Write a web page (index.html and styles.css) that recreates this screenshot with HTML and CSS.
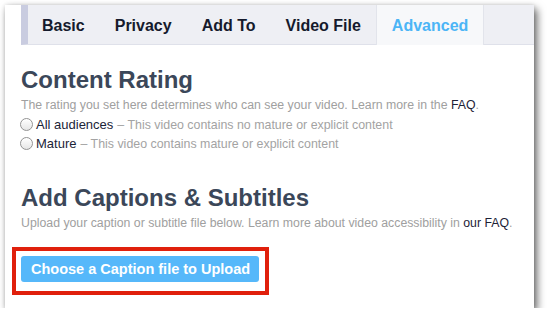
FILE: index.html
```html
<!DOCTYPE html>
<html>
<head>
<meta charset="utf-8">
<link rel="stylesheet" href="styles.css">
</head>
<body>
<div class="panel">
  <nav class="tabs">
    <span class="tab first">Basic</span>
    <span class="tab">Privacy</span>
    <span class="tab">Add To</span>
    <span class="tab">Video File</span>
    <span class="tab active">Advanced</span>
  </nav>
  <h2 class="heading first-heading">Content Rating</h2>
  <p class="desc">The rating you set here determines who can see your video. Learn more in the <a class="link">FAQ</a>.</p>
  <div class="options">
    <label class="option"><span class="radio"></span><span class="label">All audiences</span><span class="note">– This video contains no mature or explicit content</span></label>
    <label class="option"><span class="radio"></span><span class="label">Mature</span><span class="note">– This video contains mature or explicit content</span></label>
  </div>
  <h2 class="heading second-heading">Add Captions &amp; Subtitles</h2>
  <p class="desc">Upload your caption or subtitle file below. Learn more about video accessibility in <a class="link">our FAQ</a>.</p>
  <div class="highlight">
    <button class="upload">Choose a Caption file to Upload</button>
  </div>
</div>
</body>
</html>
```
FILE: styles.css
```css
html, body {
  margin: 0;
  padding: 0;
  background: #ffffff;
}

body {
  font-family: "Liberation Sans", Arial, sans-serif;
}

.panel {
  box-sizing: border-box;
  margin: 5px 0 0 5px;
  width: 529px;
  height: 303px;
  padding-left: 16px;
  background: #ffffff;
  box-shadow: 3px 4px 8px rgba(0, 0, 0, 0.6), 0 0 4px rgba(0, 0, 0, 0.12);
}

.tabs {
  display: flex;
  height: 40px;
  box-sizing: border-box;
  background: #eeeff4;
  border-left: 7px solid #c9cce0;
  border-bottom: 1px solid #dfe1ea;
}

.tab {
  padding: 2px 15px 0;
  line-height: 37px;
  font-size: 16px;
  font-weight: bold;
  color: #151a2c;
}

.tab.first {
  padding-left: 14px;
}

.tab.active {
  background: #f7f8fa;
  color: #4cb5f6;
  border-left: 1px solid #e2e4eb;
  border-right: 1px solid #e2e4eb;
  margin-bottom: -1px;
}

.heading {
  margin: 0;
  font-size: 24px;
  line-height: 28px;
  font-weight: bold;
  color: #3b4759;
}

.first-heading {
  margin-top: 21px;
}

.second-heading {
  margin-top: 31px;
}

.desc {
  margin: 3px 0 0;
  font-size: 12.3px;
  line-height: 16px;
  color: #a0a0a0;
}

.link {
  color: #1d2236;
}

.options {
  margin-top: 2px;
}

.option {
  display: flex;
  align-items: center;
  height: 19px;
  white-space: nowrap;
}

.radio {
  box-sizing: border-box;
  width: 13px;
  height: 13px;
  margin: 0 3px 0 -1px;
  border-radius: 50%;
  border: 1px solid #939393;
  background: linear-gradient(#ffffff, #e6e6e6);
  box-shadow: inset 0 1px 1px rgba(255, 255, 255, 0.9);
}

.label {
  font-size: 13px;
  color: #1b2438;
}

.note {
  margin-left: 4px;
  font-size: 12.4px;
  color: #a3a3a3;
}

.highlight {
  display: inline-block;
  margin: 16px 0 0 -9px;
  padding: 5px 6px 9px 5px;
  border: 4px solid #e0200c;
}

.upload {
  display: block;
  height: 26px;
  padding: 0 9px 0 10px;
  border: none;
  border-radius: 3px;
  background: #56b8fa;
  color: #ffffff;
  font-family: "Liberation Sans", Arial, sans-serif;
  font-size: 14.5px;
  font-weight: bold;
  line-height: 26px;
}
```
